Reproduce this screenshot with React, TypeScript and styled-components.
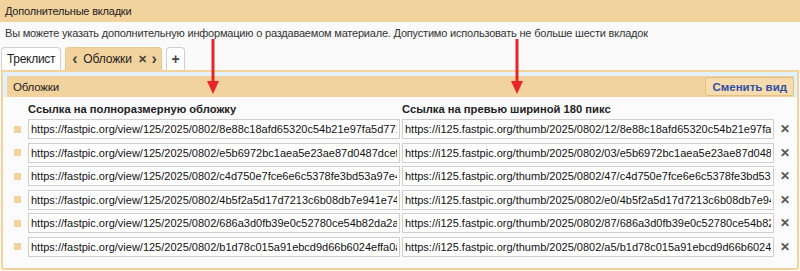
import React from "react";
import styled, { createGlobalStyle } from "styled-components";

const GlobalStyle = createGlobalStyle`
  html, body {
    margin: 0;
    padding: 0;
    background: #fafafa;
  }
  body {
    font-family: "Liberation Sans", Arial, sans-serif;
    font-size: 11px;
    color: #222;
  }
`;

const Page = styled.div`
  position: relative;
  width: 800px;
  height: 271px;
  overflow: hidden;
  background: #fafafa;
`;

const TitleBar = styled.div`
  height: 22px;
  line-height: 22px;
  padding-left: 5px;
  background: #f2d39e;
  color: #222;
  font-size: 11px;
  letter-spacing: -0.2px;
`;

const Hint = styled.div`
  height: 23px;
  line-height: 22px;
  padding-left: 5px;
  color: #333;
  font-size: 11px;
  letter-spacing: -0.2px;
`;

const Tabs = styled.div`
  display: flex;
  align-items: flex-end;
  gap: 4px;
  padding: 2px 0 0 1px;
  height: 23px;
`;

const Tab = styled.div<{ $active?: boolean }>`
  display: flex;
  align-items: center;
  height: 23px;
  padding: 0 ${p => (p.$active ? "4px 0 6px" : "5px")};
  box-sizing: border-box;
  border: 1px solid ${p => (p.$active ? "#e9c88e" : "#cfcfcf")};
  border-bottom: 0;
  border-radius: 4px 4px 0 0;
  background: ${p => (p.$active ? "#f2d39e" : "#fff")};
  color: #222;
  font-size: 12px;
  letter-spacing: -0.3px;
`;

const TabGlyph = styled.span<{ $gap?: number; $size?: number }>`
  margin-left: ${p => p.$gap ?? 0}px;
  font-weight: bold;
  font-size: ${p => p.$size ?? 16}px;
  line-height: 1;
  color: #444;
`;

const TabText = styled.span`
  margin-left: 6px;
  letter-spacing: -0.1px;
`;

const Panel = styled.div`
  margin: 0 1px;
  border: 2px solid #f2d39e;
  border-radius: 0 0 3px 3px;
  background: #fbfbfb;
  height: 200px;
  box-sizing: border-box;
`;

const PanelTop = styled.div`
  background: #e2f1fb;
  padding: 4px 3px 0 4px;
`;

const PanelHead = styled.div`
  display: flex;
  align-items: center;
  justify-content: space-between;
  height: 21px;
  padding: 0 0 0 6px;
  background: #f2d39e;
  font-size: 11.5px;
  letter-spacing: -0.2px;
`;

const SwitchButton = styled.button`
  height: 19px;
  padding: 0 6px;
  border: 1px solid #e2c186;
  background: #f6dcae;
  color: #2f4fa6;
  font-family: "Liberation Sans", Arial, sans-serif;
  font-weight: bold;
  font-size: 11.5px;
  border-radius: 2px;
`;

const Body = styled.div`
  padding: 3px 0 0 9px;
`;

const Labels = styled.div`
  display: grid;
  grid-template-columns: 16px 374px 374px;
  height: 18px;
  align-items: center;
  font-weight: bold;
  font-size: 11.2px;
  margin-bottom: 1px;
`;

const Rows = styled.div`
  display: flex;
  flex-direction: column;
  gap: 3.6px;
`;

const Row = styled.div`
  display: grid;
  grid-template-columns: 16px 372px 2px 372px 22px;
  align-items: center;
  height: 20px;
`;

const Handle = styled.span`
  width: 7px;
  height: 7px;
  background: #f2d39e;
  margin-left: 2px;
`;

const UrlInput = styled.input`
  box-sizing: border-box;
  width: 100%;
  height: 20px;
  border: 1px solid #cfcfcf;
  background: #fff;
  padding: 0 2px;
  font-family: "Liberation Sans", Arial, sans-serif;
  font-size: 11px;
  color: #111;
  outline: none;
`;

const Remove = styled.span`
  text-align: center;
  font-size: 12px;
  font-weight: bold;
  color: #555;
`;

const Arrow = styled.svg`
  position: absolute;
  top: 0;
  left: 0;
  pointer-events: none;
`;

const rows = [
  ["8e88c18afd65320c54b21e97fa5d771", "12/8e88c18afd65320c54b21e97fa5d771"],
  ["e5b6972bc1aea5e23ae87d0487dcef0", "03/e5b6972bc1aea5e23ae87d0487dcef0"],
  ["c4d750e7fce6e6c5378fe3bd53a97e47", "47/c4d750e7fce6e6c5378fe3bd53a97e47"],
  ["4b5f2a5d17d7213c6b08db7e941e74e", "e0/4b5f2a5d17d7213c6b08db7e941e74e"],
  ["686a3d0fb39e0c52780ce54b82da2a8", "87/686a3d0fb39e0c52780ce54b82da2a8"],
  ["b1d78c015a91ebcd9d66b6024effa0a", "a5/b1d78c015a91ebcd9d66b6024effa0a"],
];

export default function App() {
  return (
    <Page>
      <GlobalStyle />
      <TitleBar>Дополнительные вкладки</TitleBar>
      <Hint>
        Вы можете указать дополнительную информацию о раздаваемом материале. Допустимо использовать не больше шести вкладок
      </Hint>
      <Tabs>
        <Tab>Треклист</Tab>
        <Tab $active>
          <TabGlyph>‹</TabGlyph>
          <TabText>Обложки</TabText>
          <TabGlyph $gap={6} $size={11}>✕</TabGlyph>
          <TabGlyph $gap={5}>›</TabGlyph>
        </Tab>
        <Tab>
          <TabGlyph $size={14}>+</TabGlyph>
        </Tab>
      </Tabs>
      <Panel>
        <PanelTop>
          <PanelHead>
            Обложки
            <SwitchButton>Сменить вид</SwitchButton>
          </PanelHead>
        </PanelTop>
        <Body>
          <Labels>
            <span />
            <span>Ссылка на полноразмерную обложку</span>
            <span>Ссылка на превью шириной 180 пикс</span>
          </Labels>
          <Rows>
            {rows.map(r => (
              <Row key={r[0]}>
                <Handle />
                <UrlInput readOnly value={"https://fastpic.org/view/125/2025/0802/" + r[0]} />
                <span />
                <UrlInput readOnly value={"https://i125.fastpic.org/thumb/2025/0802/" + r[1]} />
                <Remove>✕</Remove>
              </Row>
            ))}
          </Rows>
        </Body>
      </Panel>
      <Arrow width="800" height="271">
        {[213, 517].map(x => (
          <g key={x} fill="#e8262a">
            <rect x={x - 1.5} y={39} width={3} height={44} />
            <polygon points={`${x - 6},81 ${x + 6},81 ${x},94`} />
          </g>
        ))}
      </Arrow>
    </Page>
  );
}
